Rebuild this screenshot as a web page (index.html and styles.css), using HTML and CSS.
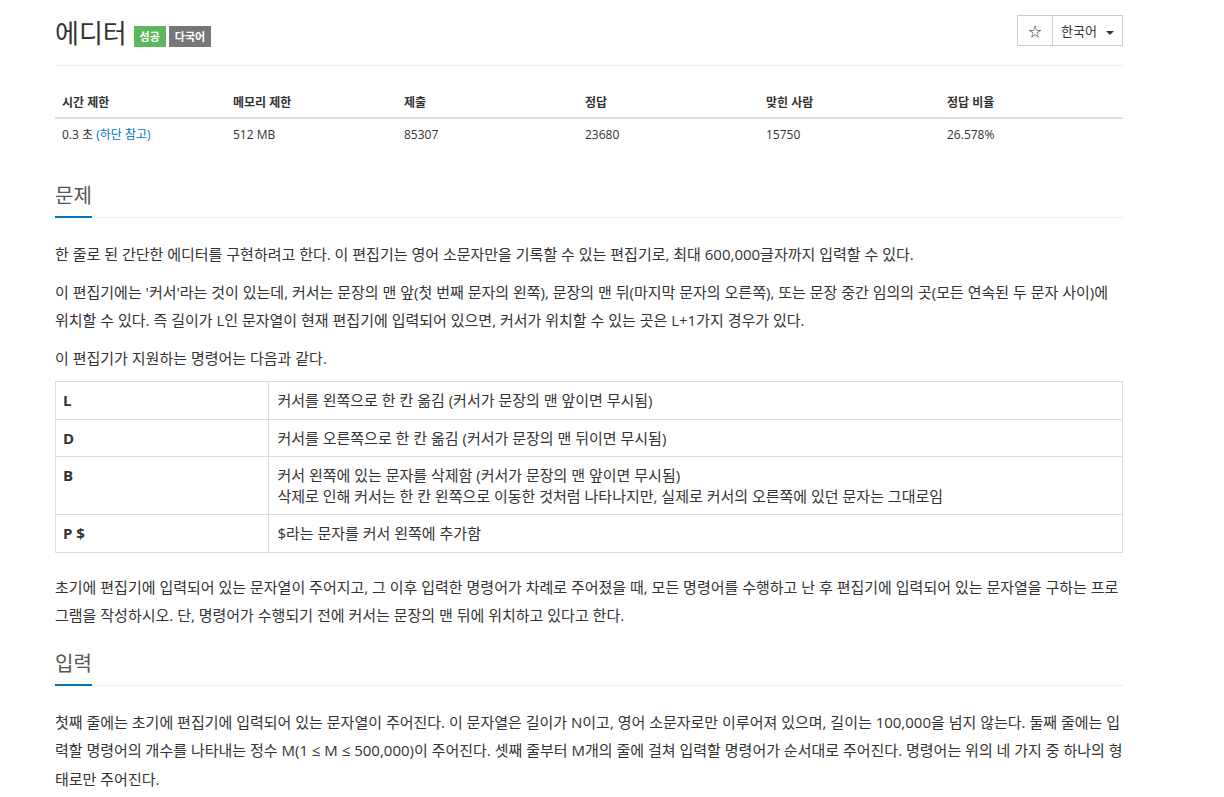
FILE: index.html
```html
<!DOCTYPE html>
<html lang="ko">
<head>
  <meta charset="UTF-8" />
  <title>에디터</title>
  <link rel="stylesheet" href="styles.css">
</head>
<body>
  <div class="container">

    <div class="page-header">
      <h1 class="title">에디터 <span class="label label-success">성공</span><span class="label label-default">다국어</span></h1>
      <div class="btn-group">
        <button class="btn star">&#9734;</button>
        <button class="btn lang">한국어 <span class="caret"></span></button>
      </div>
    </div>

    <table class="info">
      <thead>
        <tr>
          <th>시간 제한</th>
          <th>메모리 제한</th>
          <th>제출</th>
          <th>정답</th>
          <th>맞힌 사람</th>
          <th>정답 비율</th>
        </tr>
      </thead>
      <tbody>
        <tr>
          <td>0.3 초 <a href="#">(하단 참고)</a></td>
          <td>512 MB</td>
          <td>85307</td>
          <td>23680</td>
          <td>15750</td>
          <td>26.578%</td>
        </tr>
      </tbody>
    </table>

    <section class="problem-section">
      <div class="headline"><h2>문제</h2></div>
      <div class="problem-text">
        <p>한 줄로 된 간단한 에디터를 구현하려고 한다. 이 편집기는 영어 소문자만을 기록할 수 있는 편집기로, 최대 600,000글자까지 입력할 수 있다.</p>
        <p>이 편집기에는 '커서'라는 것이 있는데, 커서는 문장의 맨 앞(첫 번째 문자의 왼쪽), 문장의 맨 뒤(마지막 문자의 오른쪽), 또는 문장 중간 임의의 곳(모든 연속된 두 문자 사이)에 위치할 수 있다. 즉 길이가 L인 문자열이 현재 편집기에 입력되어 있으면, 커서가 위치할 수 있는 곳은 L+1가지 경우가 있다.</p>
        <p>이 편집기가 지원하는 명령어는 다음과 같다.</p>
        <table class="commands">
          <tbody>
            <tr>
              <th>L</th>
              <td>커서를 왼쪽으로 한 칸 옮김 (커서가 문장의 맨 앞이면 무시됨)</td>
            </tr>
            <tr>
              <th>D</th>
              <td>커서를 오른쪽으로 한 칸 옮김 (커서가 문장의 맨 뒤이면 무시됨)</td>
            </tr>
            <tr>
              <th>B</th>
              <td>커서 왼쪽에 있는 문자를 삭제함 (커서가 문장의 맨 앞이면 무시됨)<br>삭제로 인해 커서는 한 칸 왼쪽으로 이동한 것처럼 나타나지만, 실제로 커서의 오른쪽에 있던 문자는 그대로임</td>
            </tr>
            <tr>
              <th>P $</th>
              <td>$라는 문자를 커서 왼쪽에 추가함</td>
            </tr>
          </tbody>
        </table>
        <p>초기에 편집기에 입력되어 있는 문자열이 주어지고, 그 이후 입력한 명령어가 차례로 주어졌을 때, 모든 명령어를 수행하고 난 후 편집기에 입력되어 있는 문자열을 구하는 프로그램을 작성하시오. 단, 명령어가 수행되기 전에 커서는 문장의 맨 뒤에 위치하고 있다고 한다.</p>
      </div>
    </section>

    <section class="problem-section">
      <div class="headline"><h2>입력</h2></div>
      <div class="problem-text">
        <p>첫째 줄에는 초기에 편집기에 입력되어 있는 문자열이 주어진다. 이 문자열은 길이가 N이고, 영어 소문자로만 이루어져 있으며, 길이는 100,000을 넘지 않는다. 둘째 줄에는 입력할 명령어의 개수를 나타내는 정수 M(1 ≤ M ≤ 500,000)이 주어진다. 셋째 줄부터 M개의 줄에 걸쳐 입력할 명령어가 순서대로 주어진다. 명령어는 위의 네 가지 중 하나의 형태로만 주어진다.</p>
      </div>
    </section>

  </div>
</body>
</html>
```

FILE: styles.css
```css
body {
  margin: 0;
  font-family: "Open Sans", "Noto Sans CJK KR", sans-serif;
  font-size: 14px;
  color: #333;
  background: #fff;
}
a {
  color: #0076c0;
  text-decoration: none;
}
.container {
  width: 1068px;
  margin-left: 55px;
}
.page-header {
  display: flex;
  justify-content: space-between;
  align-items: flex-start;
  padding-top: 15px;
  padding-bottom: 14px;
  border-bottom: 1px solid #eee;
}
.title {
  margin: 0;
  font-size: 26px;
  font-weight: 400;
  line-height: 36px;
  color: #333;
}
.label {
  display: inline-block;
  height: 21px;
  padding: 0 6px;
  margin-left: 3px;
  font-size: 11px;
  font-weight: 700;
  line-height: 21px;
  color: #fff;
  vertical-align: 2px;
}
.label-success {
  margin-left: 0;
  background-color: #5cb85c;
}
.label-default {
  background-color: #777;
}
.btn-group {
  display: flex;
}
.btn {
  height: 31px;
  font-family: inherit;
  font-size: 13px;
  color: #333;
  background: #fff;
  border: 1px solid #ccc;
  cursor: pointer;
}
.star {
  width: 36px;
}
.lang {
  width: 71px;
  margin-left: -1px;
  text-align: left;
  padding-left: 8px;
}
.caret {
  display: inline-block;
  width: 0;
  height: 0;
  margin-left: 6px;
  vertical-align: middle;
  border-top: 4px solid #333;
  border-left: 4px solid transparent;
  border-right: 4px solid transparent;
}
.info {
  width: 100%;
  margin-top: 19px;
  margin-bottom: 31px;
  border-collapse: collapse;
  font-size: 12px;
}
.info th {
  padding: 8px 7px 5px;
  line-height: 19px;
  text-align: left;
  font-weight: 700;
  border-bottom: 2px solid #ddd;
}
.info td {
  padding: 7px;
  line-height: 17px;
  text-align: left;
}
.info th:nth-child(1),
.info th:nth-child(2) {
  width: 157px;
}
.info th:nth-child(3),
.info th:nth-child(4),
.info th:nth-child(5) {
  width: 167px;
}
.problem-section {
  margin-top: 19px;
}
.headline {
  border-bottom: 1px dotted #e0e0e0;
  margin-bottom: 22px;
}
.headline h2 {
  display: inline-block;
  margin: 0 0 -1px;
  padding-bottom: 5px;
  font-size: 20px;
  font-weight: 400;
  line-height: 30px;
  color: #555;
  border-bottom: 2px solid #0076c0;
}
.problem-text {
  font-size: 15px;
  line-height: 28.5px;
}
.problem-text p {
  margin: 0 0 9px;
}
.commands {
  width: 100%;
  margin: 3px 0 20px;
  border-collapse: collapse;
  font-size: 15px;
  line-height: 20.5px;
}
.commands th,
.commands td {
  padding: 8px;
  border: 1px solid #ddd;
  text-align: left;
  vertical-align: top;
}
.commands th {
  width: 20%;
  padding-left: 7px;
  font-weight: 700;
}
```
